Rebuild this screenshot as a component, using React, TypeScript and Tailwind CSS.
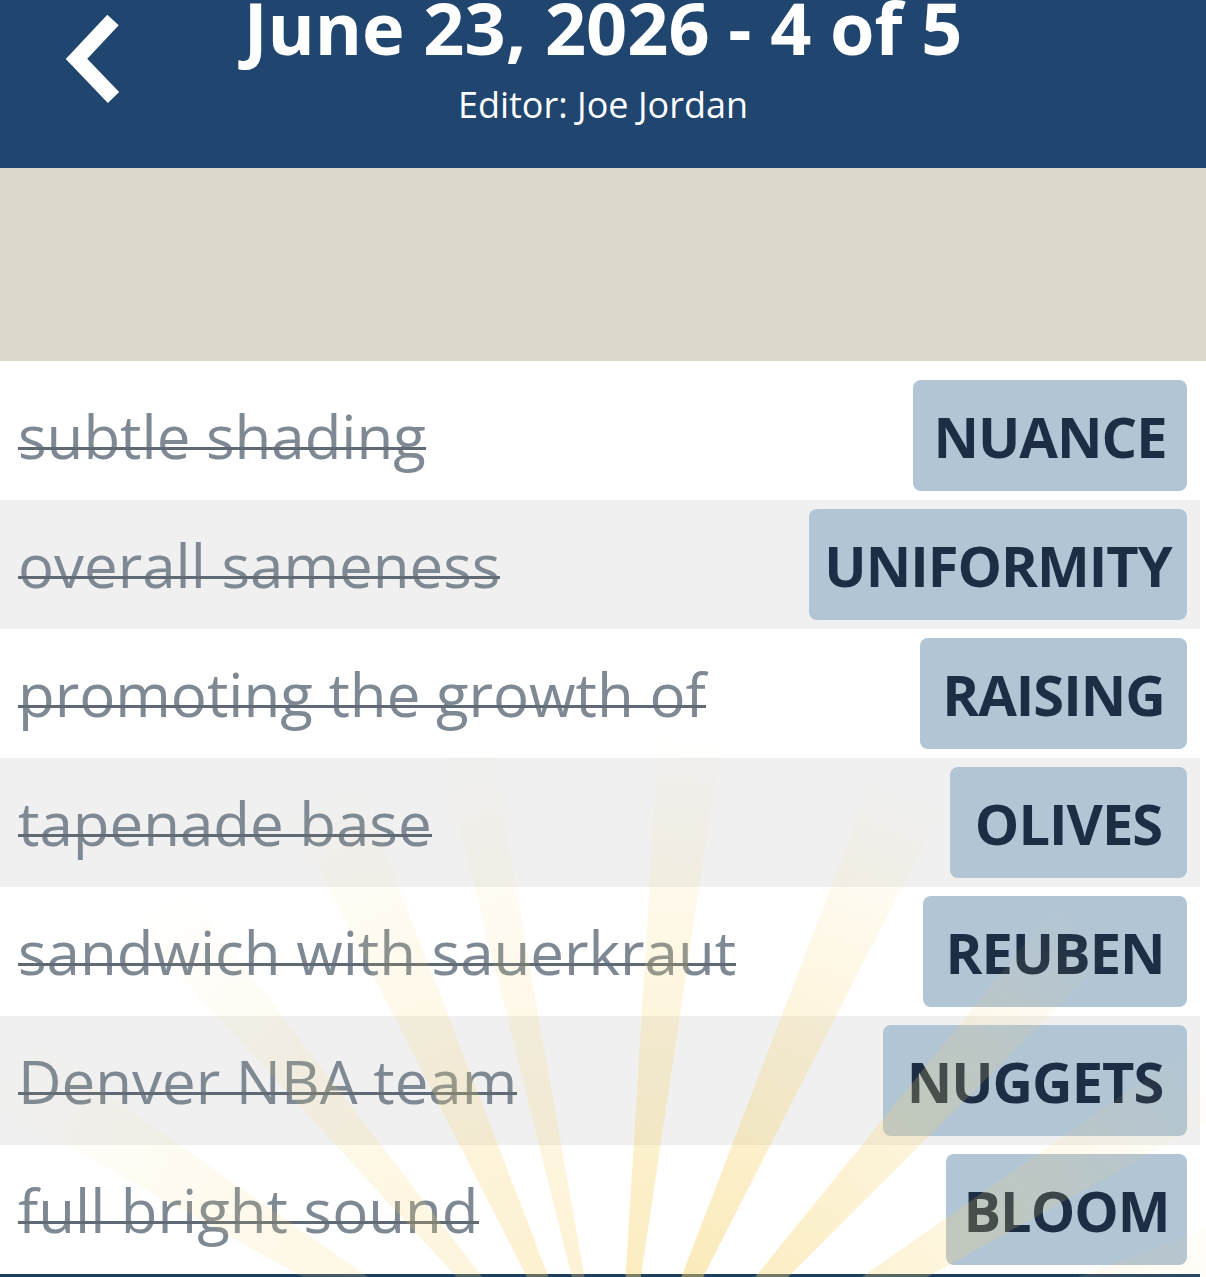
import React from 'react';

const clues = [
  { clue: 'subtle shading', answer: 'NUANCE', w: 274 },
  { clue: 'overall sameness', answer: 'UNIFORMITY', w: 378 },
  { clue: 'promoting the growth of', answer: 'RAISING', w: 267 },
  { clue: 'tapenade base', answer: 'OLIVES', w: 237 },
  { clue: 'sandwich with sauerkraut', answer: 'REUBEN', w: 264 },
  { clue: 'Denver NBA team', answer: 'NUGGETS', w: 304 },
  { clue: 'full bright sound', answer: 'BLOOM', w: 241 },
];

// sunburst rays: angle from vertical (deg), half width (deg), strength
const rays = [
  [-58, 3, 0.5],
  [-40, 2.5, 0.55],
  [-24, 3, 0.7],
  [-12, 2, 0.6],
  [6, 2.5, 0.9],
  [24, 3, 1],
  [42, 3, 0.9],
  [58, 3, 0.75],
  [72, 2.5, 0.55],
];

function Sunburst() {
  const ox = 615;
  const oy = 1089;
  const r = 1000;
  const pt = (deg: number) => {
    const a = (deg * Math.PI) / 180;
    return `${ox + Math.sin(a) * r},${oy - Math.cos(a) * r}`;
  };
  return (
    <svg className="pointer-events-none absolute left-0 top-0" width="1206" height="940">
      <defs>
        <radialGradient id="ray" cx={ox} cy={oy} r="720" gradientUnits="userSpaceOnUse">
          <stop offset="0" stopColor="#f6d36a" stopOpacity="0.6" />
          <stop offset="0.55" stopColor="#f6d36a" stopOpacity="0.3" />
          <stop offset="1" stopColor="#f6d36a" stopOpacity="0" />
        </radialGradient>
      </defs>
      {rays.map(([a, w, o], i) => (
        <polygon key={i} points={`${ox},${oy} ${pt(a - w)} ${pt(a + w)}`} fill="url(#ray)" opacity={o} />
      ))}
    </svg>
  );
}

export default function App() {
  return (
    <div className="w-[1206px] overflow-hidden bg-white font-['Open_Sans',sans-serif]">
      <header className="grid h-[168px] grid-cols-[160px_1fr_160px] bg-[#20466f] text-white">
        <svg width="160" height="120" viewBox="0 0 160 120">
          <polyline
            points="113,20 76.5,59 113.5,97.5"
            fill="none"
            stroke="#ffffff"
            strokeWidth="15.6"
            strokeLinejoin="miter"
          />
        </svg>
        <div className="flex flex-col items-center">
          <h1 className="text-[72px] font-bold leading-[54px]">June 23, 2026 - 4 of 5</h1>
          <p className="mt-[33px] text-[36px] leading-none">Editor: Joe Jordan</p>
        </div>
        <div />
      </header>

      <div className="h-[193px] bg-[#ddd8cc]" />

      <div className="relative">
        <div className="mr-[6px] pt-[10px]">
          {clues.map((c, i) => (
            <div
              key={c.answer}
              className={`flex h-[129px] items-center justify-between pl-[18px] pr-[13px] ${
                i % 2 === 1 ? 'bg-[#f0f0f0]' : 'bg-white'
              }`}
            >
              <span className="relative text-[60px] leading-none text-[#7e8993]">
                {c.clue}
                <span className="absolute left-0 right-0 top-[41px] h-[3px] bg-[#5f6a74]" />
              </span>
              <div
                className="flex h-[111px] items-center justify-center rounded-[8px] bg-[#b2c5d5] text-[56px] font-bold leading-none tracking-[-1px] text-[#1c2d44]"
                style={{ width: c.w }}
              >
                {c.answer}
              </div>
            </div>
          ))}
          <div className="h-[20px] bg-[#1f3f5f]" />
        </div>
        <Sunburst />
      </div>
    </div>
  );
}
